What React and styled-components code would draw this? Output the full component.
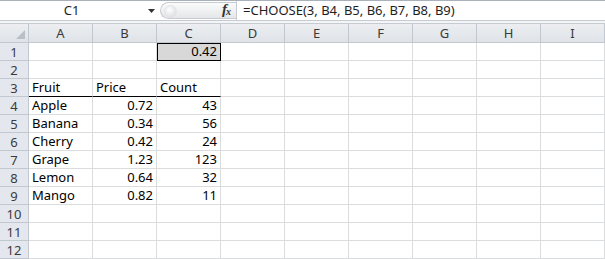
import React from 'react';
import styled, { createGlobalStyle } from 'styled-components';

const GlobalStyle = createGlobalStyle`
  body {
    margin: 0;
    background: #ffffff;
    font-family: "Noto Sans", "Liberation Sans", sans-serif;
  }
`;

const Sheet = styled.div`
  width: 605px;
  height: 259px;
  overflow: hidden;
  background: #ffffff;
`;

const FormulaBar = styled.div`
  display: flex;
  align-items: center;
  height: 19px;
  border-top: 1px solid #a9b1bb;
  border-bottom: 1px solid #c6cbd1;
  background: #ffffff;
`;

const NameBox = styled.div`
  width: 143px;
  text-align: center;
  font-size: 13px;
  color: #1e1e1e;
  line-height: 19px;
`;

const DropArrow = styled.div`
  width: 16px;
  display: flex;
  justify-content: center;
  align-items: center;
`;

const Grip = styled.div`
  position: relative;
  width: 76px;
  height: 17px;
  margin-left: 1px;
  box-sizing: border-box;
  border: 1px solid #c8ccd1;
  border-right: none;
  border-radius: 9px 0 0 9px;
  background: linear-gradient(#fbfbfb, #e4e6e9);
  display: flex;
  align-items: center;
  justify-content: flex-end;
  padding-right: 6px;
`;

const Knob = styled.div`
  position: absolute;
  left: 3px;
  top: 2px;
  width: 11px;
  height: 11px;
  border-radius: 50%;
  background: radial-gradient(circle at 40% 35%, #ffffff, #d3d6da);
  border: 1px solid #e2e4e7;
`;

const Fx = styled.span`
  font-family: "Liberation Serif", serif;
  font-style: italic;
  font-weight: bold;
  font-size: 15px;
  color: #333;
  line-height: 15px;
  letter-spacing: -1px;

  sub {
    font-size: 10px;
    vertical-align: -1px;
  }
`;

const FormulaText = styled.div`
  flex: 1;
  height: 19px;
  border-left: 1px solid #c8ccd1;
  padding-left: 6px;
  font-size: 13px;
  line-height: 19px;
  color: #1e1e1e;
  white-space: nowrap;
`;

const Band = styled.div`
  height: 2px;
  background: #f4f5f7;
  border-bottom: 1px solid #c6cbd1;
`;

const Grid = styled.div`
  display: grid;
  grid-template-columns: 29px repeat(9, 64px);
  grid-template-rows: 19px repeat(12, 18px);
`;

const HeaderBase = styled.div`
  box-sizing: border-box;
  background: linear-gradient(#eceef1, #dfe3e8);
  border-right: 1px solid #c2c8cf;
  border-bottom: 1px solid #c2c8cf;
  color: #3a3a3a;
  font-size: 13px;
  display: flex;
  align-items: center;
  justify-content: center;
`;

const Corner = styled(HeaderBase)`
  align-items: flex-end;
  justify-content: flex-end;
  padding: 0 3px 3px 0;
`;

const ColHeader = styled(HeaderBase)``;

const RowHeader = styled(HeaderBase)`
  background: #e4e8ee;
`;

const Cell = styled.div`
  box-sizing: border-box;
  border-right: 1px solid #dadcdd;
  border-bottom: 1px solid ${p => (p.$underline ? '#000000' : '#dadcdd')};
  background: ${p => (p.$fill ? '#d8d8d8' : '#ffffff')};
  outline: ${p => (p.$boxed ? '1px solid #000000' : 'none')};
  outline-offset: -1px;
  font-size: 13px;
  color: #000000;
  line-height: 17px;
  padding: 0 3px;
  text-align: ${p => (p.$num ? 'right' : 'left')};
  white-space: nowrap;
  overflow: hidden;
`;

const columns = ['A', 'B', 'C', 'D', 'E', 'F', 'G', 'H', 'I'];

const data = {
  1: { C: { v: '0.42', num: true, fill: true, boxed: true } },
  3: {
    A: { v: 'Fruit', underline: true },
    B: { v: 'Price', underline: true },
    C: { v: 'Count', underline: true },
  },
  4: { A: { v: 'Apple' }, B: { v: '0.72', num: true }, C: { v: '43', num: true } },
  5: { A: { v: 'Banana' }, B: { v: '0.34', num: true }, C: { v: '56', num: true } },
  6: { A: { v: 'Cherry' }, B: { v: '0.42', num: true }, C: { v: '24', num: true } },
  7: { A: { v: 'Grape' }, B: { v: '1.23', num: true }, C: { v: '123', num: true } },
  8: { A: { v: 'Lemon' }, B: { v: '0.64', num: true }, C: { v: '32', num: true } },
  9: { A: { v: 'Mango' }, B: { v: '0.82', num: true }, C: { v: '11', num: true } },
};

const rows = Array.from({ length: 12 }, (_, i) => i + 1);

const App = () => {
  return (
    <Sheet>
      <GlobalStyle />
      <FormulaBar>
        <NameBox>C1</NameBox>
        <DropArrow>
          <svg width="7" height="4" viewBox="0 0 7 4">
            <path d="M0 0 H7 L3.5 4 Z" fill="#333" />
          </svg>
        </DropArrow>
        <Grip>
          <Knob />
          <Fx>f<sub>x</sub></Fx>
        </Grip>
        <FormulaText>=CHOOSE(3, B4, B5, B6, B7, B8, B9)</FormulaText>
      </FormulaBar>
      <Band />
      <Grid>
        <Corner>
          <svg width="9" height="9" viewBox="0 0 9 9">
            <path d="M9 0 V9 H0 Z" fill="#b9bfc6" />
          </svg>
        </Corner>
        {columns.map(c => (
          <ColHeader key={c}>{c}</ColHeader>
        ))}
        {rows.map(r => (
          <React.Fragment key={r}>
            <RowHeader>{r}</RowHeader>
            {columns.map(c => {
              const cell = (data[r] && data[r][c]) || {};
              return (
                <Cell
                  key={c}
                  $num={cell.num}
                  $fill={cell.fill}
                  $boxed={cell.boxed}
                  $underline={cell.underline}
                >
                  {cell.v}
                </Cell>
              );
            })}
          </React.Fragment>
        ))}
      </Grid>
    </Sheet>
  );
};

export default App;
